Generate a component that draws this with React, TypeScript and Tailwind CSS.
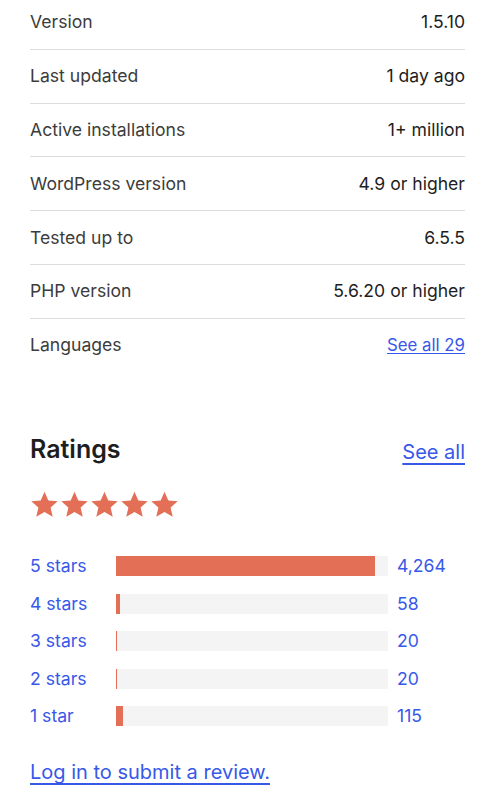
const meta = [
  { label: "Version", value: "1.5.10" },
  { label: "Last updated", value: "1 day ago" },
  { label: "Active installations", value: "1+ million" },
  { label: "WordPress version", value: "4.9 or higher" },
  { label: "Tested up to", value: "6.5.5" },
  { label: "PHP version", value: "5.6.20 or higher" },
];

const ratings = [
  { label: "5 stars", count: 4264 },
  { label: "4 stars", count: 58 },
  { label: "3 stars", count: 20 },
  { label: "2 stars", count: 20 },
  { label: "1 star", count: 115 },
];

function Star() {
  return (
    <svg viewBox="0 0 24 24" className="h-[29px] w-[29px]" fill="#e26f56">
      <path d="M12 1.4l3.15 7.2 7.8.7-5.9 5.2 1.75 7.7L12 18.2 5.2 22.2l1.75-7.7-5.9-5.2 7.8-.7z" />
    </svg>
  );
}

export default function App() {
  const total = ratings.reduce((s, r) => s + r.count, 0);

  return (
    <div className="min-h-screen bg-white font-['Inter',sans-serif] text-[#1e1e1e]">
      <div className="ml-[30px] mr-[34px] -mt-[4px] pb-8">
        {/* Meta list */}
        <ul>
          {meta.map((m) => (
            <li
              key={m.label}
              className="flex items-center justify-between border-b border-[#dcdcdc] py-[14.4px] text-[17.6px] leading-6"
            >
              <span className="text-[#3c3c3c]">{m.label}</span>
              <span className="text-[#1e1e1e]">{m.value}</span>
            </li>
          ))}
          <li className="flex items-center justify-between py-[14.4px] text-[17.6px] leading-6">
            <span className="text-[#3c3c3c]">Languages</span>
            <a href="#" className="text-[16.8px] text-[#3858e9] underline underline-offset-2">
              See all 29
            </a>
          </li>
        </ul>

        {/* Ratings */}
        <div className="mt-[61px] flex items-center justify-between">
          <h2 className="text-[25px] font-semibold leading-8 text-[#1e1e1e]">Ratings</h2>
          <a href="#" className="mt-[6px] text-[20px] leading-7 text-[#3858e9] underline underline-offset-4">
            See all
          </a>
        </div>

        <div className="mt-[24px] flex gap-[1px]">
          {[0, 1, 2, 3, 4].map((i) => (
            <Star key={i} />
          ))}
        </div>

        <ul className="mt-[35px] flex flex-col gap-[13.5px]">
          {ratings.map((r) => (
            <li key={r.label} className="flex items-center text-[17.6px] leading-6 text-[#3858e9]">
              <span className="w-[86px]">{r.label}</span>
              <span className="h-[20px] w-[272px] bg-[#f4f4f4]">
                <span
                  className="block h-full bg-[#e26f56]"
                  style={{ width: `${(r.count / total) * 100}%` }}
                />
              </span>
              <span className="ml-[9px]">{r.count.toLocaleString("en-US")}</span>
            </li>
          ))}
        </ul>

        <a
          href="#"
          className="mt-[30px] inline-block text-[20px] leading-7 text-[#3858e9] underline underline-offset-4"
        >
          Log in to submit a review.
        </a>
      </div>
    </div>
  );
}
